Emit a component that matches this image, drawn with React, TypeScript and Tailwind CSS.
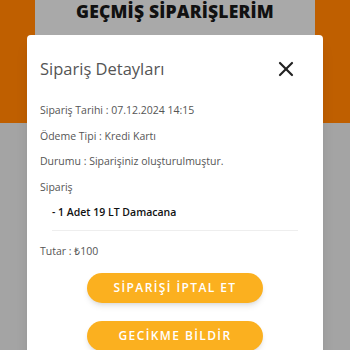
import { X } from 'lucide-react'

const rows = [
  'Sipariş Tarihi : 07.12.2024 14:15',
  'Ödeme Tipi : Kredi Kartı',
  'Durumu : Siparişiniz oluşturulmuştur.',
]

export default function App() {
  return (
    <div
      className="relative h-[350px] w-[350px] overflow-hidden bg-[#a4a4a4]"
      style={{ fontFamily: '"Open Sans", sans-serif' }}
    >
      {/* page behind the modal */}
      <div className="flex h-[123px] justify-center bg-[#bf5f00]">
        <div className="flex h-full w-[280px] justify-center bg-[#a9a9a9]">
          <h1 className="pt-[1px] text-[17.5px] font-black leading-[20px] tracking-[0.2px] text-[#111]">
            GEÇMİŞ SİPARİŞLERİM
          </h1>
        </div>
      </div>

      {/* modal */}
      <div className="absolute left-[27px] top-[35px] w-[296px] rounded-[4px] bg-white px-[13px] pb-10 pt-[22px] shadow-lg">
        <div className="flex items-center justify-between pr-[12px]">
          <h2 className="text-[16.5px] leading-[24px] text-[#555]">Sipariş Detayları</h2>
          <X size={24} strokeWidth={2.2} className="text-[#222]" />
        </div>

        <div className="mt-[22px] flex flex-col gap-[10.5px] text-[10.5px] text-[#555]">
          {rows.map((r) => (
            <p key={r} className="leading-[15px]">{r}</p>
          ))}
          <p className="leading-[15px]">Sipariş</p>
        </div>

        <div className="ml-[12px] mr-[12px] mt-[10.5px] border-b border-[#eee] pb-[10px]">
          <p className="text-[10.5px] font-semibold leading-[15px] text-[#111]">- 1 Adet 19 LT Damacana</p>
        </div>

        <p className="mt-[13px] text-[10.5px] leading-[15px] text-[#555]">Tutar : ₺100</p>

        <div className="mt-[14px] flex flex-col items-center gap-[18px]">
          <button className="h-[30px] w-[176px] rounded-full bg-[#fbb01f] text-[12px] font-semibold tracking-[1.4px] text-white shadow-md">
            SİPARİŞİ İPTAL ET
          </button>
          <button className="h-[30px] w-[176px] rounded-full bg-[#fbb01f] text-[12px] font-semibold tracking-[1.4px] text-white shadow-md">
            GECİKME BİLDİR
          </button>
        </div>
      </div>
    </div>
  )
}
